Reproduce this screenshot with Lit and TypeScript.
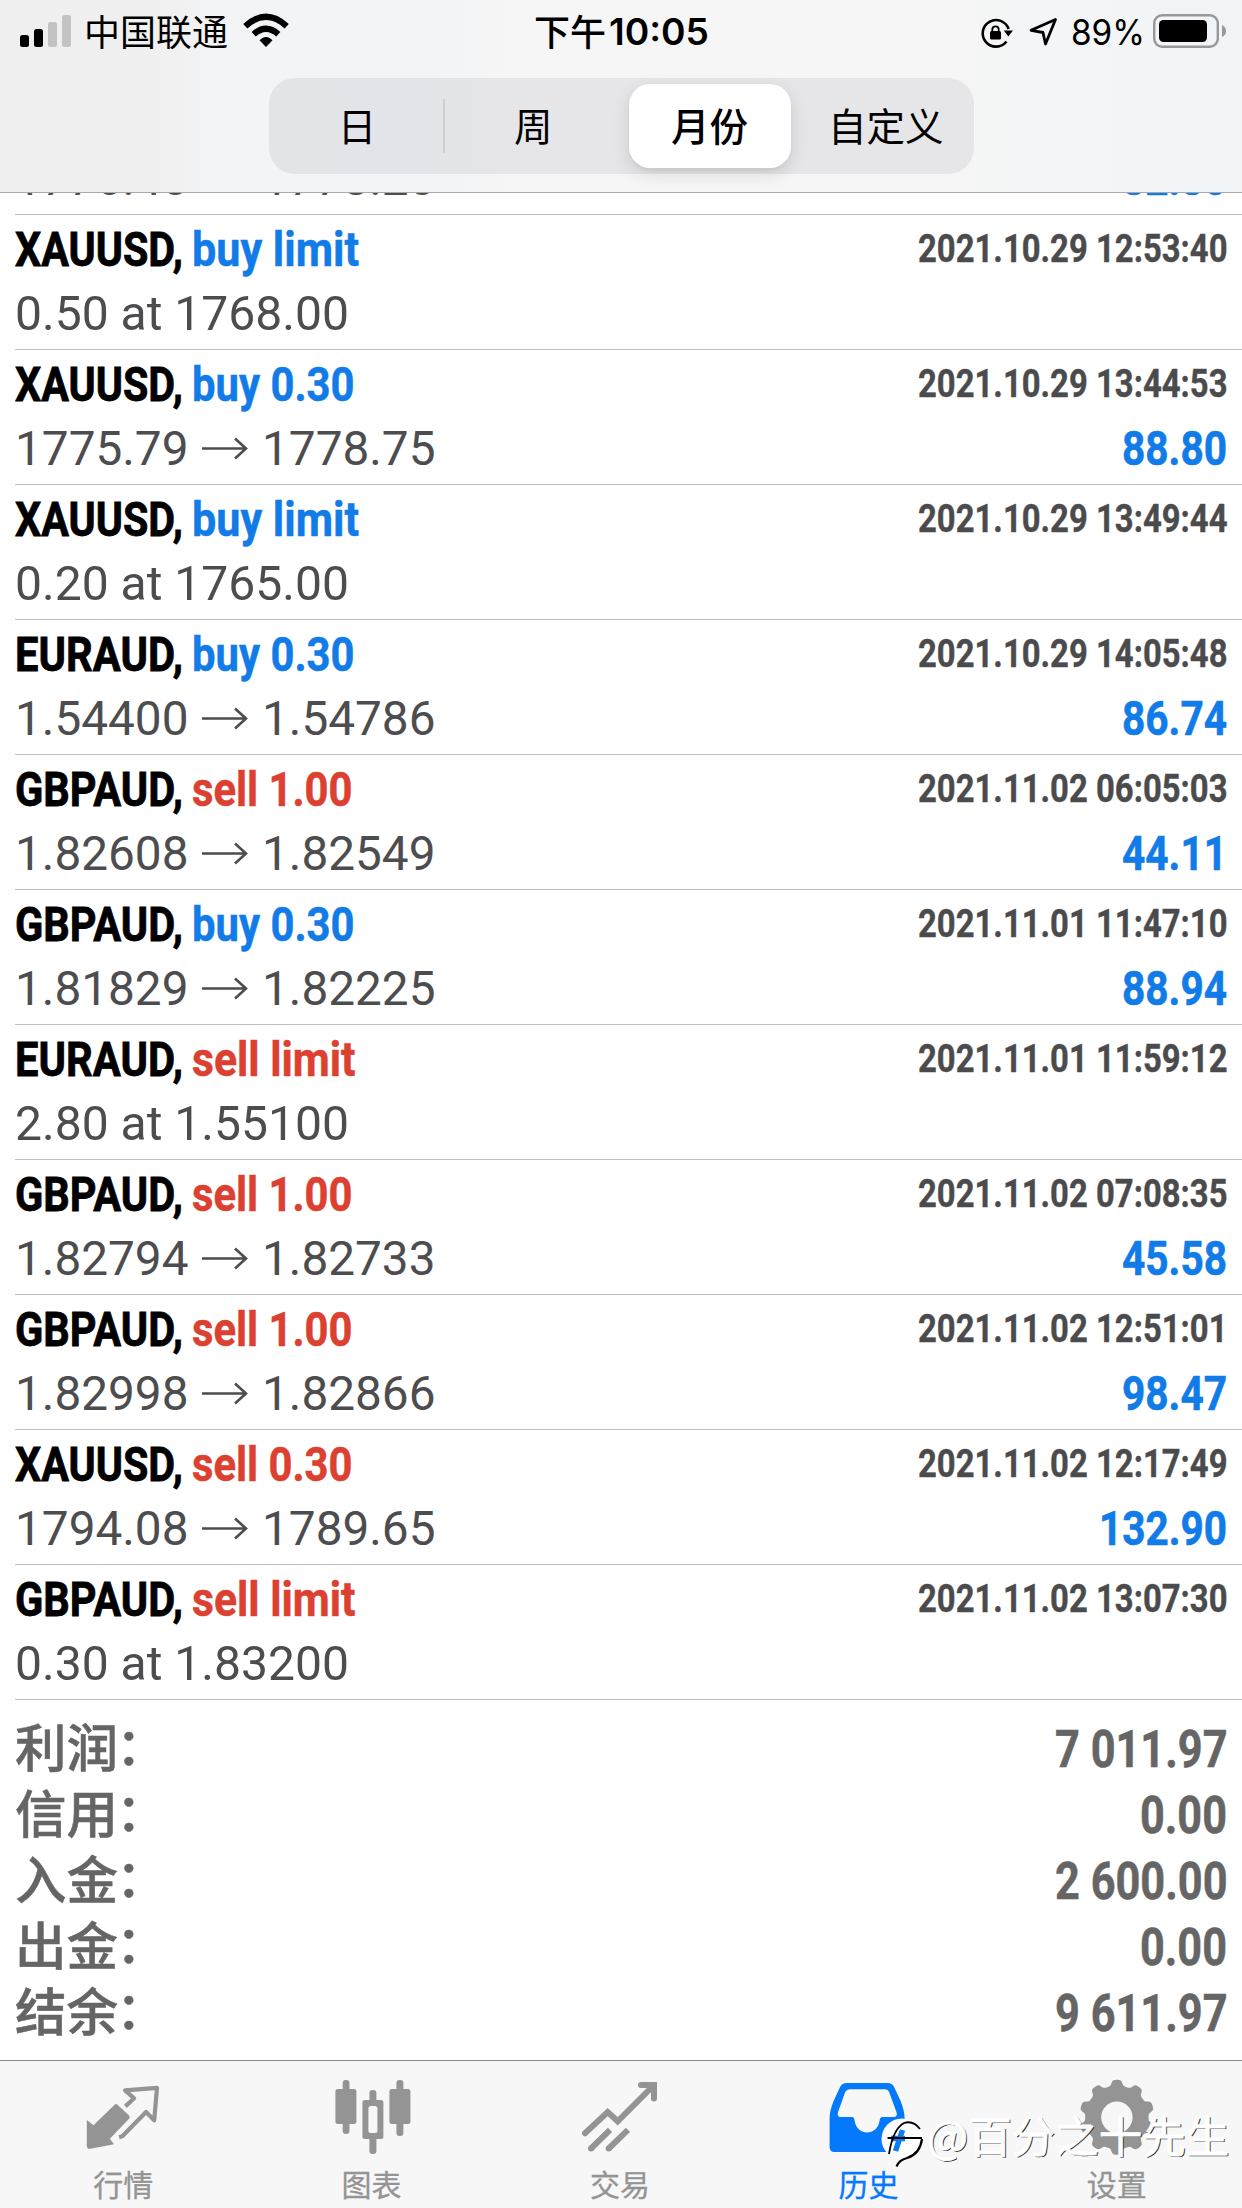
import { LitElement, html, svg, css } from "lit";
import { customElement, property } from "lit/decorators.js";

/** One line of text, condensed horizontally so that it fills exactly `w` pixels. */
@customElement("fit-text")
class FitText extends LitElement {
  @property({ type: Number }) w = 100;
  @property() text = "";
  static styles = css`
    :host { display: block; white-space: pre; flex: none; }
    .in { display: inline-block; transform-origin: 0 50%; }
  `;
  render() {
    return html`<span class="in">${this.text}</span>`;
  }
  updated() {
    this.style.width = this.w + "px";
    const el = this.renderRoot.querySelector(".in") as HTMLElement;
    el.style.transform = "none";
    const nat = el.getBoundingClientRect().width;
    if (nat > 0) el.style.transform = `scaleX(${this.w / nat})`;
  }
}

type Deal = { sym?: string; side?: string; a: string; b?: string; date?: string; profit?: string };

const deals: Deal[] = [
  { a: "1776.40", b: "1778.20", profit: "82.80" },
  { sym: "XAUUSD,", side: "buy limit", a: "0.50 at 1768.00", date: "2021.10.29 12:53:40" },
  { sym: "XAUUSD,", side: "buy 0.30", a: "1775.79", b: "1778.75", date: "2021.10.29 13:44:53", profit: "88.80" },
  { sym: "XAUUSD,", side: "buy limit", a: "0.20 at 1765.00", date: "2021.10.29 13:49:44" },
  { sym: "EURAUD,", side: "buy 0.30", a: "1.54400", b: "1.54786", date: "2021.10.29 14:05:48", profit: "86.74" },
  { sym: "GBPAUD,", side: "sell 1.00", a: "1.82608", b: "1.82549", date: "2021.11.02 06:05:03", profit: "44.11" },
  { sym: "GBPAUD,", side: "buy 0.30", a: "1.81829", b: "1.82225", date: "2021.11.01 11:47:10", profit: "88.94" },
  { sym: "EURAUD,", side: "sell limit", a: "2.80 at 1.55100", date: "2021.11.01 11:59:12" },
  { sym: "GBPAUD,", side: "sell 1.00", a: "1.82794", b: "1.82733", date: "2021.11.02 07:08:35", profit: "45.58" },
  { sym: "GBPAUD,", side: "sell 1.00", a: "1.82998", b: "1.82866", date: "2021.11.02 12:51:01", profit: "98.47" },
  { sym: "XAUUSD,", side: "sell 0.30", a: "1794.08", b: "1789.65", date: "2021.11.02 12:17:49", profit: "132.90" },
  { sym: "GBPAUD,", side: "sell limit", a: "0.30 at 1.83200", date: "2021.11.02 13:07:30" },
];

const sideWidth: Record<string, number> = {
  "buy limit": 167, "buy 0.30": 162.5, "sell limit": 163.5, "sell 1.00": 160.5, "sell 0.30": 160.5,
};

const totals: [string, string, number][] = [
  ["利润", "7 011.97", 172.5],
  ["信用", "0.00", 87],
  ["入金", "2 600.00", 172.5],
  ["出金", "0.00", 87],
  ["结余", "9 611.97", 172.5],
];

const gearPath = (cx: number, cy: number) => {
  let d = "";
  for (let i = 0; i < 240; i++) {
    const t = (i / 240) * Math.PI * 2;
    const r = 34.6 + 2.9 * Math.tanh(2.2 * Math.cos(10 * t)) / Math.tanh(2.2);
    d += `${i ? "L" : "M"}${(cx + r * Math.sin(t)).toFixed(2)} ${(cy - r * Math.cos(t)).toFixed(2)}`;
  }
  return d + `ZM${cx - 15.7} ${cy}a15.7 15.7 0 1 0 31.4 0a15.7 15.7 0 1 0 -31.4 0Z`;
};

const tabs = [
  {
    label: "行情", box: "79.2 2076 90 80", art: svg`
      <path fill="currentColor" d="M87 2120L93.7 2125.3L114.5 2105Q116.3 2103.2 118 2105L129.3 2115.5Q130.6 2117.3 129.3 2118.8L110 2138.7L114.3 2144.3L90.5 2148.8Q87 2149 87 2146Z"/>
      <path fill="none" stroke="currentColor" stroke-width="4.2" stroke-linejoin="round" d="M125.6 2106.4L134.3 2098.3L125.3 2090.4L157.2 2087.8L154.4 2120.4L146.3 2112L122.5 2136.3L119.3 2137.2"/>`,
  },
  {
    label: "图表", box: "327.6 2076 90 80", art: svg`
      <g fill="currentColor">
        <rect x="335" y="2089" width="21" height="35" rx="2.5"/><rect x="342.3" y="2080" width="6.8" height="54" rx="3.2"/>
        <rect x="389" y="2089" width="21" height="35" rx="2.5"/><rect x="396" y="2080" width="7" height="56" rx="3.2"/>
        <rect x="362" y="2100" width="21" height="39" rx="2.5"/><rect x="369" y="2090" width="7" height="64" rx="3.2"/>
      </g>
      <rect x="368" y="2106" width="9" height="27" rx="2.5" fill="#f7f7f7"/>`,
  },
  {
    label: "交易", box: "576 2076 90 80", art: svg`
      <g fill="none" stroke="currentColor" stroke-width="6">
        <path stroke-linecap="round" d="M585 2133.3L607.7 2112L617.7 2121.3L653 2086"/>
        <path stroke-linecap="round" d="M641 2085H654V2098.5"/>
        <path d="M591 2148.5L610 2129.8M608.7 2148.5L628 2129.8"/>
      </g>
      <circle cx="591" cy="2148.5" r="3" fill="currentColor"/><circle cx="608.7" cy="2148.5" r="3" fill="currentColor"/>`,
  },
  {
    label: "历史", on: true, box: "824.4 2076 90 80", art: svg`
      <path fill="currentColor" fill-rule="evenodd" d="M830 2147V2118Q830 2111 834 2101L840 2088Q842 2083 847 2083H888Q893 2083 895 2088L901 2101Q905 2111 905 2118V2147Q905 2152 900 2152H835Q830 2152 830 2147ZM850 2089.3Q847 2089.3 845.6 2092L838.3 2112.5Q837.5 2117 841 2117H852.5Q854.5 2117 855 2120.5C857 2136.5 878 2136.5 880 2120.5Q880.5 2117 882.5 2117H894Q898 2117 897 2112.5L889.5 2092Q888.5 2089.3 885.5 2089.3Z"/>`,
  },
  {
    label: "设置", box: "1072.8 2076 90 80", art: svg`<path fill="currentColor" fill-rule="evenodd" d=${gearPath(1116.7, 2117.3)}/>`,
  },
];

@customElement("app-root")
class AppRoot extends LitElement {
  static styles = css`
    :host {
      display: block; width: 1242px; height: 2208px; overflow: hidden; background: #fff;
      font-family: Roboto, "Liberation Sans", "Noto Sans CJK SC", sans-serif;
    }
    * { box-sizing: border-box; }
    svg { display: block; flex: none; }
    .page { position: relative; display: flex; flex-direction: column; height: 100%; }
    .head {
      flex: none; height: 193px; border-bottom: 1px solid #a9a9ab;
      background: linear-gradient(90deg, #efefef 0, #f0f0f0 12%, #f3f4f6 20%, #f3f4f7 34%, #f6f6f6 42%, #f6f6f6 75%, #f1f4f7 100%);
    }
    .status { display: grid; grid-template-columns: 1fr auto 1fr; align-items: center; height: 62px; padding: 0 16px 0 20px; color: #000; }
    .group { display: flex; align-items: center; }
    .group.end { justify-content: flex-end; }
    .cn { font-family: "Noto Sans CJK SC", sans-serif; font-size: 36px; line-height: 59px; height: 62px; }
    .carrier { margin-left: 12px; width: 148px; white-space: nowrap; }
    .wifi { margin-left: 11px; }
    .ampm { font-weight: 500; }
    .clock { font: 600 36.5px/64px Inter, sans-serif; margin: 0 3px 0 3px; }
    .pct { font: 400 35px/62px Inter, sans-serif; margin-left: 11px; }
    .battery { margin-left: 7px; }
    .seg {
      display: grid; grid-template-columns: repeat(4, 1fr); width: 705px; height: 96px; margin: 16px 0 0 269px;
      border-radius: 26px; background: rgba(118, 118, 128, 0.12);
    }
    .opt { display: flex; align-items: center; justify-content: center; padding: 0 0 3px 0; font: 400 38.5px/1 "Noto Sans CJK SC", sans-serif; color: #000; }
    .opt.first { background: linear-gradient(#cfcfd3, #cfcfd3) no-repeat 174px 21px / 2px 54px; }
    .opt.on { font-weight: 500; margin: 6px 7px; border-radius: 21px; background: #fff; box-shadow: 0 6px 18px rgba(0, 0, 0, 0.12), 0 3px 3px rgba(0, 0, 0, 0.04); }

    .list { flex: 1; min-height: 0; overflow: hidden; display: flex; flex-direction: column; justify-content: flex-end; }
    .deal { flex: none; height: 135px; margin-left: 15px; padding: 1px 15px 0 0; border-bottom: 1px solid #bfbfc1; }
    .top { display: flex; height: 68px; font-weight: 700; font-size: 49px; line-height: 68px; }
    .sym { color: #000; -webkit-text-stroke: 0.8px #000; }
    .side { margin-left: 9px; -webkit-text-stroke: 0.5px currentColor; }
    .date { margin-left: auto; font-size: 39.5px; line-height: 66px; color: #4b4b4d; -webkit-text-stroke: 0.4px currentColor; }
    .bottom { display: flex; align-items: center; height: 59px; font-size: 48px; line-height: 59px; color: #4d4d4f; }
    .arrow { margin: 0 12px; }
    .buy { color: #117be8; }
    .sell { color: #dc4031; }
    .profit { margin-left: auto; font-weight: 700; font-size: 49px; color: #117be8; -webkit-text-stroke: 0.6px currentColor; }

    .totals { flex: none; height: 360px; padding: 14px 15px 0; color: #656565; }
    .total { display: flex; justify-content: space-between; height: 66px; font-size: 51px; line-height: 71px; font-weight: 700; -webkit-text-stroke: 0.5px #656565; }
    .name { font: 500 51.5px/62px "Noto Sans CJK SC", sans-serif; height: 66px; }
    .colon { display: inline-block; transform: translate(-2px, -2px); }

    .bar { flex: none; display: grid; grid-template-columns: repeat(5, 1fr); height: 148px; border-top: 1px solid #8c8c8c; background: #f7f7f7; }
    .tab { display: flex; flex-direction: column; align-items: center; padding-top: 15px; color: #949494; font: 400 30px/44px "Noto Sans CJK SC", sans-serif; }
    .tab.on { color: #0479fb; }
    .tab span { margin: 5px 2px 0 0; -webkit-text-stroke: 0.3px currentColor; }
    .mark { position: absolute; left: 880px; top: 2110px; display: flex; align-items: flex-start; height: 60px; }
    .mark span { margin-left: -1px; font: 400 43.5px/50px "Noto Sans CJK SC", sans-serif; color: #fff; -webkit-text-stroke: 0.8px #fff; text-shadow: 1.3px 1.3px 0 #2a2a2a; white-space: nowrap; }
  `;

  deal(d: Deal) {
    const side = d.side ?? "";
    const kind = side.startsWith("buy") ? "buy" : "sell";
    return html`<div class="deal">
      <div class="top">
        ${d.sym
          ? html`<fit-text class="sym" .w=${168} .text=${d.sym}></fit-text>
              <fit-text class="side ${kind}" .w=${sideWidth[side]} .text=${side}></fit-text>
              <fit-text class="date" .w=${309.5} .text=${d.date ?? ""}></fit-text>`
          : ""}
      </div>
      <div class="bottom">
        <fit-text .w=${d.b ? 173.5 : 334} .text=${d.a}></fit-text>
        ${d.b
          ? html`<svg class="arrow" width="49" height="30" viewBox="0 0 49 30" fill="none" stroke="currentColor" stroke-width="2.6"><path d="M1 14.5H45M34 4.500L45 14.500L34 24.500"/></svg>
              <fit-text .w=${173.5} .text=${d.b}></fit-text>`
          : ""}
        ${d.profit ? html`<fit-text class="profit" .w=${d.profit.length > 5 ? 128 : 105} .text=${d.profit}></fit-text>` : ""}
      </div>
    </div>`;
  }

  render() {
    return html`<div class="page">
      <div class="head">
        <div class="status">
          <div class="group">
            <svg width="52" height="62" viewBox="20 0 52 62">
              <rect x="20" y="34" width="9" height="12" rx="2.5"/><rect x="34" y="28" width="9" height="18" rx="2.5"/>
              <g fill="#c3c3c4"><rect x="48" y="21" width="9" height="25" rx="2.5"/><rect x="62" y="14" width="9" height="32" rx="2.5"/></g>
            </svg>
            <span class="cn carrier">中国联通</span>
            <svg class="wifi" width="46" height="62" viewBox="243 0 46 62">
              <path d="M266 45.5L260 39.3Q266 33.5 272 39.3Z" stroke="#000" stroke-width="1" stroke-linejoin="round"/>
              <path d="M253.7 33.2Q266 22.3 278.3 33.2M245.3 25.2Q266 6.5 286.7 25.2" fill="none" stroke="#000" stroke-width="6.2"/>
            </svg>
          </div>
          <div class="group">
            <span class="cn ampm">下午</span><fit-text class="clock" .w=${100} .text=${"10:05"}></fit-text>
          </div>
          <div class="group end">
            <svg width="80" height="62" viewBox="980 0 80 62">
              <path d="M1006.5 40.5A13.3 13.3 0 1 1 1008.6 28" fill="none" stroke="#000" stroke-width="2.6"/>
              <path d="M1003.8 29.5H1013L1008.3 35.5Z"/>
              <rect x="990" y="30" width="11" height="8.5" rx="1.5"/>
              <path d="M992.3 31V28.5A3.2 3.2 0 0 1 998.7 28.5V31" fill="none" stroke="#000" stroke-width="1.8"/>
              <path d="M1055.5 18.5L1031 29.3L1043 31.5L1045.5 43Z" fill="none" stroke="#000" stroke-width="2.8" stroke-linejoin="round"/>
            </svg>
            <fit-text class="pct" .w=${74} .text=${"89%"}></fit-text>
            <svg class="battery" width="74" height="62" viewBox="1152 0 74 62">
              <rect x="1154.2" y="14.2" width="63.6" height="31.6" rx="8" fill="none" stroke="#98989a" stroke-width="2.4"/>
              <rect x="1159" y="19" width="48" height="22" rx="4.5"/>
              <path d="M1222 24Q1226 26 1226 30T1222 36Z" fill="#98989a"/>
            </svg>
          </div>
        </div>
        <div class="seg">
          <div class="opt first">日</div><div class="opt">周</div><div class="opt on">月份</div><div class="opt">自定义</div>
        </div>
      </div>
      <div class="list">${deals.map((d) => this.deal(d))}</div>
      <div class="totals">
        ${totals.map(([n, v, w]) => html`<div class="total"><span class="name">${n}<span class="colon">：</span></span><fit-text .w=${w} .text=${v}></fit-text></div>`)}
      </div>
      <div class="bar">
        ${tabs.map((t) => html`<div class="tab ${t.on ? "on" : ""}"><svg width="90" height="80" viewBox=${t.box}>${t.art}</svg><span>${t.label}</span></div>`)}
      </div>
      <div class="mark">
        <svg width="48" height="60" viewBox="880 2110 48 60">
          <circle cx="902" cy="2139" r="20.5" fill="#fff"/>
          <path d="M895.5 2151L902.5 2130M891 2138.5H905" fill="none" stroke="#0b7cf5" stroke-width="5.5"/>
          <path d="M887.5 2138H922" stroke="#000" stroke-width="2"/>
          <path d="M889 2154Q893 2129 904 2123Q913 2120 920 2129" fill="none" stroke="#000" stroke-width="1.8"/>
          <path d="M922 2139Q920 2154 907 2158Q899 2160 896.5 2166.5" fill="none" stroke="#000" stroke-width="2.2"/>
        </svg>
        <span>@百分之十先生</span>
      </div>
    </div>`;
  }
}
